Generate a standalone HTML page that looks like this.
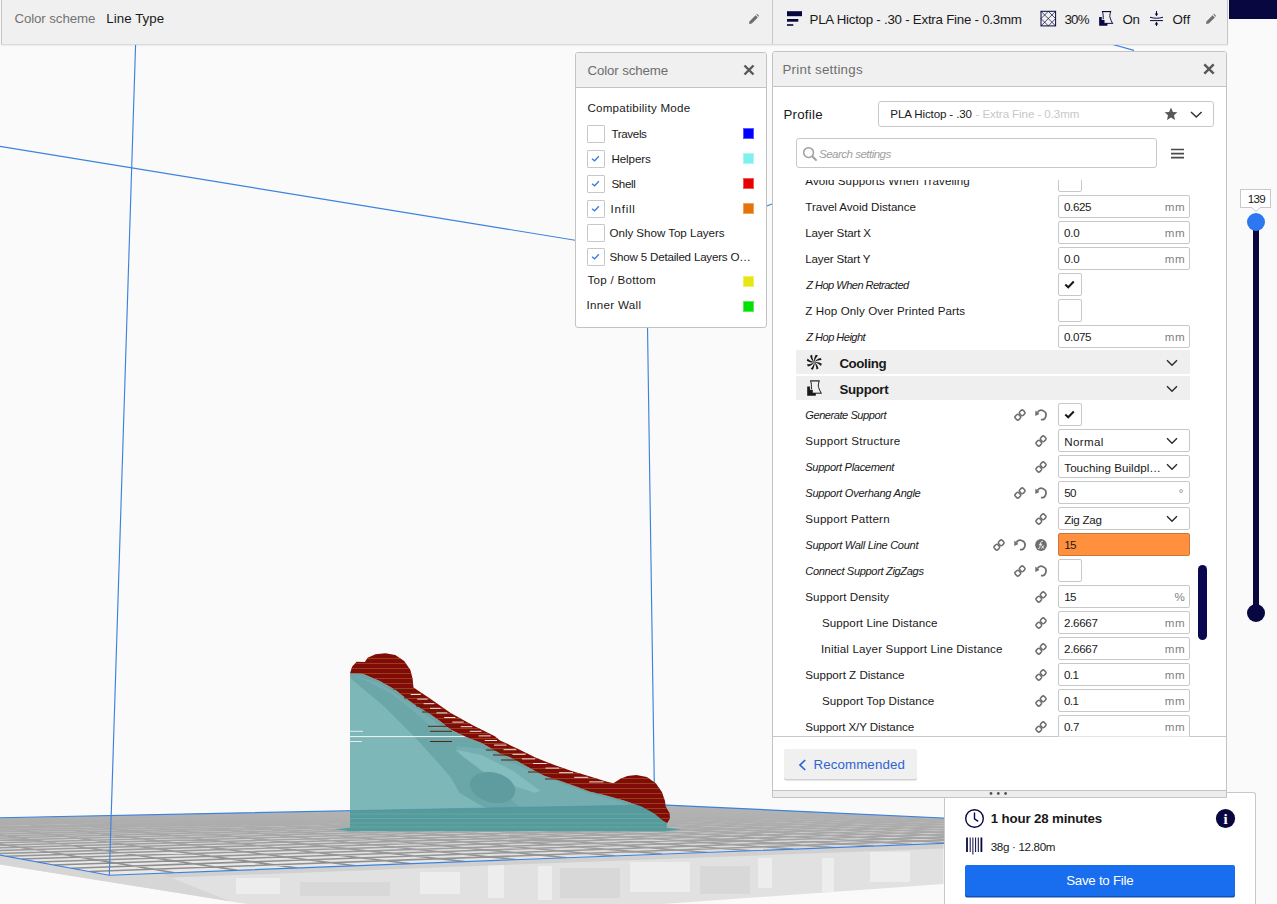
<!DOCTYPE html>
<html><head><meta charset="utf-8"><title>Cura</title>
<style>
html,body{margin:0;padding:0;}
body{width:1277px;height:904px;overflow:hidden;background:#fafafa;position:relative;font-family:"Liberation Sans",sans-serif;}
.abs{position:absolute;}
.t{position:absolute;white-space:nowrap;line-height:1;}
#scene{position:absolute;left:0;top:0;}
#topbar{position:absolute;left:1px;top:0;width:1227px;height:44.5px;background:#f0f0f0;border:1px solid #c6c6c6;border-top:none;border-bottom:1.5px solid #dadada;box-sizing:border-box;box-shadow:0 1px 1.5px rgba(0,0,0,.06);}
#topdiv{position:absolute;left:772px;top:0;width:1px;height:43.5px;background:#c8c8c8;}
#navy{position:absolute;left:1229px;top:0;width:48px;height:19px;background:#08073f;}
.panel{position:absolute;background:#fff;border:1px solid #c3c3c3;border-radius:3px;box-sizing:border-box;overflow:hidden;}
.phead{position:absolute;left:0;top:0;right:0;background:#f0f0f0;border-bottom:1px solid #c3c3c3;}
.cs-cb{position:absolute;left:587px;width:18px;height:18px;box-sizing:border-box;border:1px solid #c8c8c8;border-radius:1px;background:#fff;}
.sw{position:absolute;left:743px;width:11px;height:11px;box-sizing:border-box;border:1px solid rgba(255,255,255,.35);}
#scroll{position:absolute;left:0;top:0;width:1277px;height:904px;clip-path:inset(180px 0 167.5px 0);}
.fld{position:absolute;left:1058px;width:132px;height:23px;box-sizing:border-box;border:1px solid #c8c8c8;border-radius:2px;background:#fff;}
.fld.warn{background:#ff913e;border-color:#c8783c;}
.cb{position:absolute;left:1058px;width:23.5px;height:23px;box-sizing:border-box;border:1px solid #c8c8c8;border-radius:2px;background:#fff;}
.cat{position:absolute;left:796px;width:394px;height:24px;background:#efefef;}
.chev{position:absolute;}
</style></head>
<body>

<!-- 3D scene -->
<svg id="scene" width="1277" height="904" viewBox="0 0 1277 904">
<path d="M-2 854.6 L109.3 875.2 L943.5 843.4 L943.5 884 L663 904 L247 904 L-2 864.1 Z" fill="#e1e1e1"/>
<g fill="#ededed"><rect x="488" y="862" width="16" height="36"/><rect x="538" y="866" width="14" height="34"/><rect x="630" y="862" width="60" height="30"/><rect x="758" y="858" width="14" height="30"/><rect x="822" y="858" width="12" height="34"/><rect x="870" y="852" width="40" height="30"/><rect x="236" y="878" width="44" height="16"/><rect x="420" y="872" width="40" height="22"/></g>
<g fill="#d8d8d8"><rect x="560" y="868" width="60" height="30"/><rect x="700" y="866" width="50" height="28"/><rect x="300" y="882" width="90" height="14"/></g>
<path d="M109.3 875.2 L943.5 843.4 L943.5 848.4 L122 879.4 Z" fill="#d0d0d0"/>
<path d="M-2 854.6 L109.3 875.2 L160 873.3 L230 901.3 L-2 864.1 Z" fill="#d6d6d6"/>
<defs><linearGradient id="pg" x1="0" y1="805" x2="0" y2="875" gradientUnits="userSpaceOnUse"><stop offset="0" stop-color="#e2e2e2"/><stop offset="1" stop-color="#e9e9e9"/></linearGradient><linearGradient id="pf" x1="0" y1="806" x2="0" y2="862" gradientUnits="userSpaceOnUse"><stop offset="0" stop-color="#b8b8b8" stop-opacity="0.92"/><stop offset="0.45" stop-color="#bcbcbc" stop-opacity="0.6"/><stop offset="1" stop-color="#c4c4c4" stop-opacity="0"/></linearGradient><clipPath id="pc"><path d="M-183.9 821.4 L656 804.6 L1241.7 832.0 L109.3 875.2 Z"/></clipPath></defs>
<path d="M-183.9 821.4 L656 804.6 L1241.7 832.0 L109.3 875.2 Z" fill="url(#pg)"/>
<path d="M174.4 872.7L-142.2 820.6M237.0 870.3L-101.4 819.8M297.2 868.0L-61.6 819.0M355.2 865.8L-22.7 818.2M411.0 863.7L15.4 817.4M464.8 861.6L52.6 816.7M516.7 859.7L89.0 815.9M566.8 857.7L124.6 815.2M615.2 855.9L159.5 814.5M662.0 854.1L193.6 813.8M707.2 852.4L227.0 813.2M750.9 850.7L259.8 812.5M793.3 849.1L291.8 811.9M834.3 847.5L323.3 811.3M874.0 846.0L354.0 810.6M912.6 844.6L384.2 810.0M949.9 843.1L413.8 809.4M986.2 841.7L442.8 808.9M1021.4 840.4L471.2 808.3M1055.6 839.1L499.1 807.7M1088.8 837.8L526.5 807.2M1121.1 836.6L553.4 806.7M1152.5 835.4L579.8 806.1M1183.0 834.2L605.6 805.6M1212.8 833.1L631.0 805.1M89.7 871.6L1207.9 830.4M71.3 868.2L1175.4 828.9M53.7 865.0L1144.0 827.4M37.1 862.0L1113.7 826.0M21.3 859.1L1084.4 824.6M6.3 856.3L1056.1 823.3M-8.0 853.7L1028.8 822.0M-21.6 851.2L1002.4 820.8M-34.6 848.8L976.8 819.6M-47.1 846.5L952.0 818.4M-59.0 844.3L927.9 817.3M-70.4 842.2L904.6 816.2M-81.3 840.2L882.1 815.2M-91.8 838.3L860.1 814.2M-101.8 836.5L838.9 813.2M-111.5 834.7L818.2 812.2M-120.8 833.0L798.1 811.2M-129.7 831.3L778.6 810.3M-138.3 829.8L759.7 809.4M-146.6 828.2L741.2 808.6M-154.6 826.8L723.2 807.7M-162.3 825.4L705.8 806.9M-169.7 824.0L688.7 806.1M-176.9 822.7L672.2 805.4" fill="none" stroke="#8e8e8e" stroke-width="1.55" clip-path="url(#pc)"/>
<path d="M-183.9 821.4 L656 804.6 L1241.7 832.0 L109.3 875.2 Z" fill="url(#pf)"/>
<g fill="none" stroke="#3c82dc" stroke-width="1.15">
<path d="M-183.9 821.4 L656 804.6 L1241.7 832.0 L109.3 875.2 Z"/>
<path d="M135.6 44 L109.3 875.2"/>
<path d="M646.4 252 L654.6 805"/>
<path d="M0 146.3 L647 252 L772 204"/>
<path d="M1111 44 L1134 50.4"/>
</g>
<path d="M334 829.3 L350 827.8 L666 827.8 L681 829.3 L666 831.2 L350 831.2 Z" fill="#4f9f9f"/>
<path d="M350.0 673.2 L362.1 673.6 L379.8 680.9 L395.3 689.8 L406.4 698.7 L417.5 706.4 L428.5 713.0 L439.6 720.8 L450.7 729.6 L466.2 736.9 L481.7 742.9 L500.0 753.6 L510.6 757.5 L526.5 766.2 L544.2 775.8 L561.9 781.6 L579.6 787.8 L588.5 791.3 L606.2 795.6 L623.9 800.4 L641.6 806.5 L654.0 813.3 L662.8 820.4 L667.3 823.0 L666.4 831.0 L350.0 831.0 Z" fill="#6ba6a8"/>
<path d="M350.0 675.4 L351.1 678.7 L384.3 706.4 L413.0 735.2 L435.2 759.5 L450.7 777.2 L459.5 792.7 L481.7 806.0 L494.9 810.4 L350.0 810.4 Z" fill="#7db7b8"/>
<path d="M353.3 675.4 L379.8 683.2 L406.4 700.9 L428.5 716.4 L444.0 728.5 L433.0 728.5 L413.0 710.8 L390.9 693.1 L366.6 680.9 Z" fill="#74aeb0"/>
<path d="M455.1 746.2 L481.7 748.5 L508.2 759.5 L500.0 758.4 L526.5 769.0 L561.9 783.2 L588.5 792.9 L623.9 802.7 L650.4 815.0 L664.6 823.9 L666.4 831.0 L588.5 831.0 L553.1 823.9 L526.5 813.3 L510.6 799.1 Z" fill="#74aeb0"/>
<path d="M455.1 749.6 L481.7 755.1 L512.6 770.6 L540.3 791.0 L534.8 792.7 L508.2 783.9 L481.7 770.6 L463.9 757.3 Z" fill="#84bdbe"/>
<ellipse cx="492.7" cy="787.5" rx="23" ry="15" transform="rotate(14 492.7 787.5)" fill="#5f9c9f"/>
<path d="M350 810.6 L656 804.8 L666.4 805 L666.4 831 L350 831 Z" fill="#569b9b"/>
<path d="M350 814 H660 M350 818.5 H662 M350 823 H664 M350 827 H665" stroke="#63a6a6" stroke-width="1.2"/>
<path d="M350 810.6 L656 804.8" stroke="#4a90b8" stroke-width="1" opacity="0.5"/>
<path d="M350 736.6 H495" stroke="#f2f6f6" stroke-width="1"/><path d="M350 731.3 H363 M350 741.5 H362" stroke="#e4eeee" stroke-width="1"/>
<path d="M350.0 673.2 L352.2 666.6 L356.6 661.7 L364.8 662.1 L367.7 657.7 L375.4 654.2 L385.4 653.3 L395.3 655.1 L404.2 661.0 L410.4 669.9 L412.6 678.7 L413.5 687.6 L428.5 697.5 L450.7 713.0 L472.8 725.2 L494.9 736.3 L500.0 740.4 L517.7 748.7 L535.4 757.5 L553.1 764.6 L570.8 770.8 L588.5 776.1 L606.2 781.4 L613.3 783.2 L620.4 778.8 L627.4 776.1 L636.3 775.0 L646.9 777.0 L655.8 783.2 L661.9 792.0 L665.0 800.9 L665.5 806.2 L669.6 813.3 L669.9 818.6 L667.3 823.0 L667.3 823.0 L662.8 820.4 L654.0 813.3 L641.6 806.5 L623.9 800.4 L606.2 795.6 L588.5 791.3 L579.6 787.8 L561.9 781.6 L544.2 775.8 L526.5 766.2 L510.6 757.5 L500.0 753.6 L481.7 742.9 L466.2 736.9 L450.7 729.6 L439.6 720.8 L428.5 713.0 L417.5 706.4 L406.4 698.7 L395.3 689.8 L379.8 680.9 L362.1 673.6 L350.0 673.2 Z" fill="#820c0a"/>
<path d="M393 689 H411 M404 698 H424 M416 706 H436 M422 712 H444 M428 726.3 H452 M430 731.3 H452 M430 741.5 H452 M486 750 H510 M493 755 H517 M501 760 H524 M528 772 H552 M545 779 H566 M590 791 H606" stroke="#5a2410" stroke-width="1"/>
<clipPath id="rc"><path d="M350.0 673.2 L352.2 666.6 L356.6 661.7 L364.8 662.1 L367.7 657.7 L375.4 654.2 L385.4 653.3 L395.3 655.1 L404.2 661.0 L410.4 669.9 L412.6 678.7 L413.5 687.6 L428.5 697.5 L450.7 713.0 L472.8 725.2 L494.9 736.3 L500.0 740.4 L517.7 748.7 L535.4 757.5 L553.1 764.6 L570.8 770.8 L588.5 776.1 L606.2 781.4 L613.3 783.2 L620.4 778.8 L627.4 776.1 L636.3 775.0 L646.9 777.0 L655.8 783.2 L661.9 792.0 L665.0 800.9 L665.5 806.2 L669.6 813.3 L669.9 818.6 L667.3 823.0 L667.3 823.0 L662.8 820.4 L654.0 813.3 L641.6 806.5 L623.9 800.4 L606.2 795.6 L588.5 791.3 L579.6 787.8 L561.9 781.6 L544.2 775.8 L526.5 766.2 L510.6 757.5 L500.0 753.6 L481.7 742.9 L466.2 736.9 L450.7 729.6 L439.6 720.8 L428.5 713.0 L417.5 706.4 L406.4 698.7 L395.3 689.8 L379.8 680.9 L362.1 673.6 L350.0 673.2 Z"/></clipPath><path d="M340 658.5 H690M340 663.5 H690M340 668.5 H690M340 673.5 H690M340 678.5 H690M340 683.5 H690M340 688.5 H690M340 693.5 H690M340 698.5 H690M340 703.5 H690M340 708.5 H690M340 713.5 H690M340 718.5 H690M340 723.5 H690M340 728.5 H690M340 733.5 H690M340 738.5 H690M340 743.5 H690M340 748.5 H690M340 753.5 H690M340 758.5 H690M340 763.5 H690M340 768.5 H690M340 773.5 H690M340 778.5 H690M340 783.5 H690M340 788.5 H690M340 793.5 H690M340 798.5 H690M340 803.5 H690M340 808.5 H690M340 813.5 H690M340 818.5 H690M340 823.5 H690" stroke="#a0521a" stroke-width="0.9" clip-path="url(#rc)" opacity="0.85"/>
<path d="M420.7 694.5 h-10.0M427.5 699.1 h-10.2M434.1 703.7 h-10.5M440.7 708.3 h-10.7M447.3 712.9 h-10.9M455.4 717.5 h-11.2M463.7 722.1 h-11.4M472.3 726.7 h-11.6M481.5 731.3 h-11.8M490.7 735.9 h-12.1M497.1 740.5 h-12.3M506.5 745.1 h-12.5M516.3 749.7 h-12.8M525.5 754.3 h-13.0M535.1 758.9 h-13.2M546.6 763.5 h-13.5M559.2 768.1 h-13.7M573.0 772.7 h-13.9M588.3 777.3 h-14.1M603.6 781.9 h-14.4" stroke="#f1e4e0" stroke-width="1" fill="none"/>
</svg>

<!-- top bar -->
<div id="topbar"></div>
<div id="topdiv"></div>
<div id="navy"></div>
<!-- top bar icons -->
<svg class="abs" style="left:0;top:0" width="1277" height="44" viewBox="0 0 1277 44">
  <!-- pencils -->
  <g id="pencilA" fill="#6e6e6e" transform="translate(749,14)">
    <path d="M0 10 L0.6 7.2 L6.6 1.2 L8.8 3.4 L2.8 9.4 Z"/><path d="M7.3 0.5 L8 -0.2 L10.2 2 L9.5 2.7 Z"/>
  </g>
  <g fill="#6e6e6e" transform="translate(1206,14)">
    <path d="M0 10 L0.6 7.2 L6.6 1.2 L8.8 3.4 L2.8 9.4 Z"/><path d="M7.3 0.5 L8 -0.2 L10.2 2 L9.5 2.7 Z"/>
  </g>
  <!-- quality icon -->
  <g fill="#08073f"><rect x="787" y="11.2" width="15" height="5"/><rect x="787" y="19" width="11.3" height="2.7"/><rect x="787" y="24.2" width="6.3" height="1.6"/></g>
  <!-- infill icon -->
  <g fill="none" stroke="#08073f" stroke-width="1">
    <rect x="1041" y="11.3" width="14.6" height="14.6" stroke-width="1"/>
    <path d="M1041 18.6 L1048.3 11.3 L1055.6 18.6 L1048.3 25.9 Z M1041 11.3 L1055.6 25.9 M1055.6 11.3 L1041 25.9" stroke-width="0.7"/>
  </g>
  <!-- support icon -->
  <g transform="translate(1098 10.7) scale(0.96)"><g color="#08073f">
  <path d="M4.1 0.9 H13.7" fill="none" stroke="currentColor" stroke-width="1.2"/>
  <path d="M4.7 1.2 C5.4 3.5 5.5 5.5 5.4 9 M13.1 1.2 C12.4 4 12 6 12.6 7.5 C13.2 9.5 14.2 11 14.9 12.9 M7 13.2 H15.8" fill="none" stroke="currentColor" stroke-width="1"/>
  <path d="M1.2 6.5 H3.9 V9.8 H6.8 V13.1 H9.8 V15.8 H1.2 Z" fill="currentColor"/></g></g>
  <!-- adhesion icon -->
  <g fill="none" stroke="#08073f" stroke-width="1">
    <path d="M1150 17.2 C1154 18.6 1159 18.6 1163 17.2 M1150 20.6 L1163 20.6"/>
    <path d="M1156.5 11 L1156.5 15.6 M1156.5 22.4 L1156.5 26" stroke-width="1"/>
    <path d="M1154.7 13.6 L1156.5 16.2 L1158.3 13.6 Z M1154.7 24.4 L1156.5 21.8 L1158.3 24.4 Z" fill="#08073f" stroke="none"/>
  </g>
</svg>

<!-- color scheme panel -->
<div class="panel" style="left:575px;top:52px;width:192px;height:276px;"><div class="phead" style="height:34px"></div></div>
<svg class="abs" style="left:743px;top:63.8px" width="12" height="12" viewBox="0 0 12 12"><path d="M1.5 1.5 L10.5 10.5 M10.5 1.5 L1.5 10.5" stroke="#585858" stroke-width="2.4" fill="none"/></svg>
<div class="cs-cb" style="top:125px"></div>
<div class="cs-cb" style="top:150px"></div>
<div class="cs-cb" style="top:175px"></div>
<div class="cs-cb" style="top:200px"></div>
<div class="cs-cb" style="top:224px"></div>
<div class="cs-cb" style="top:248px"></div>
<svg class="abs" style="left:0;top:0" width="1277" height="340" viewBox="0 0 1277 340">
 <g fill="none" stroke="#3c78dc" stroke-width="1.25">
  <path d="M592 158.7 L594.6 160.8 L598.9 156.2"/><path d="M592 183.7 L594.6 185.8 L598.9 181.2"/><path d="M592 208.7 L594.6 210.8 L598.9 206.2"/><path d="M592 256.7 L594.6 258.8 L598.9 254.2"/>
 </g>
</svg>
<div class="sw" style="top:128.2px;background:#0000ff"></div>
<div class="sw" style="top:153.2px;background:#7ff0f0"></div>
<div class="sw" style="top:178.2px;background:#e60000"></div>
<div class="sw" style="top:203.2px;background:#e6730a"></div>
<div class="sw" style="top:276.2px;background:#e6e614"></div>
<div class="sw" style="top:301.2px;background:#00e100"></div>

<!-- print settings panel -->
<div class="panel" style="left:771.5px;top:51px;width:455.5px;height:747px;border-radius:3px 3px 0 0"><div class="phead" style="height:34px"></div>
  <div class="abs" style="left:0;right:0;top:684px;height:1px;background:#c8c8c8"></div>
  <div class="abs" style="left:0;right:0;top:738px;height:8px;background:#ededed;border-top:1px solid #c3c3c3;"></div>
</div>
<svg class="abs" style="left:1203px;top:63px" width="12" height="12" viewBox="0 0 12 12"><path d="M1.3 1.3 L10.7 10.7 M10.7 1.3 L1.3 10.7" stroke="#585858" stroke-width="2.4" fill="none"/></svg>
<!-- drag dots -->
<svg class="abs" style="left:985px;top:790px" width="30" height="8" viewBox="0 0 30 8"><g fill="#555"><circle cx="6" cy="3.5" r="1.4"/><circle cx="13.3" cy="3.5" r="1.4"/><circle cx="20.6" cy="3.5" r="1.4"/></g></svg>
<!-- profile dropdown -->
<div class="abs" style="left:878px;top:100.5px;width:336px;height:26.5px;box-sizing:border-box;border:1px solid #c8c8c8;border-radius:3px;background:#fff"></div>
<svg class="abs" style="left:1164px;top:107px" width="14" height="14" viewBox="0 0 14 14"><path d="M7 0.6 L8.9 4.9 L13.4 5.3 L10 8.3 L11 12.9 L7 10.5 L3 12.9 L4 8.3 L0.6 5.3 L5.1 4.9 Z" fill="#585858"/></svg>
<svg class="abs" style="left:1190px;top:110.5px" width="13" height="8" viewBox="0 0 13 8"><path d="M1 1 L6.3 6 L11.6 1" fill="none" stroke="#333" stroke-width="1.5"/></svg>
<!-- search -->
<div class="abs" style="left:796px;top:138px;width:361px;height:29.5px;box-sizing:border-box;border:1px solid #c8c8c8;border-radius:3px;background:#fff"></div>
<svg class="abs" style="left:802px;top:146px" width="16" height="16" viewBox="0 0 16 16"><circle cx="6.6" cy="6.6" r="4.9" fill="none" stroke="#a0a0a0" stroke-width="1.5"/><path d="M10.2 10.2 L14.6 14.6" stroke="#a0a0a0" stroke-width="2"/></svg>
<svg class="abs" style="left:1170.5px;top:147.5px" width="13" height="12" viewBox="0 0 13 12"><path d="M0 1.5 H13 M0 5.6 H13 M0 9.7 H13" stroke="#4a4a4a" stroke-width="1.7"/></svg>

<div id="scroll">
<div class="cb" style="top:169px"></div>
<div class="fld" style="top:195px"></div>
<div class="fld" style="top:221px"></div>
<div class="fld" style="top:247px"></div>
<div class="cb" style="top:273px"></div>
<svg class="abs" style="left:1064px;top:280.4px" width="12" height="10" viewBox="0 0 12 10"><path d="M1.3 4.6 L4.2 7.3 L9.8 1.5" fill="none" stroke="#191919" stroke-width="2"/></svg>
<div class="cb" style="top:299px"></div>
<div class="fld" style="top:325px"></div>
<div class="cat" style="top:350px"></div>
<svg class="chev" style="left:1166px;top:359px" width="12" height="8" viewBox="0 0 12 8"><path d="M1 1.2 L6 6.2 L11 1.2" fill="none" stroke="#2f2f2f" stroke-width="1.45"/></svg>
<div class="cat" style="top:376px"></div>
<svg class="chev" style="left:1166px;top:385px" width="12" height="8" viewBox="0 0 12 8"><path d="M1 1.2 L6 6.2 L11 1.2" fill="none" stroke="#2f2f2f" stroke-width="1.45"/></svg>
<div class="cb" style="top:403px"></div>
<svg class="abs" style="left:1064px;top:410.4px" width="12" height="10" viewBox="0 0 12 10"><path d="M1.3 4.6 L4.2 7.3 L9.8 1.5" fill="none" stroke="#191919" stroke-width="2"/></svg>
<svg class="abs" style="left:1034px;top:408px" width="14" height="14" viewBox="0 0 14 14"><g fill="none" stroke="#6e6e6e" stroke-width="1.75">
  <path d="M3.4 4.4 A4.7 4.7 0 1 1 6.9 11.7"/>
  <path d="M1.3 2.6 L1.3 8 L5.4 6 Z" fill="#6e6e6e" stroke="none"/></g></svg>
<svg class="abs" style="left:1013px;top:408px" width="14" height="14" viewBox="0 0 14 14"><g fill="none" stroke="#6e6e6e" stroke-width="1.55">
  <rect x="-2.45" y="-2.45" width="4.9" height="4.9" rx="1.5" transform="translate(9.2 4.8) rotate(45)"/>
  <rect x="-2.45" y="-2.45" width="4.9" height="4.9" rx="1.5" transform="translate(4.8 9.2) rotate(45)"/></g></svg>
<div class="fld" style="top:429px"></div>
<svg class="chev" style="left:1166px;top:437px" width="12" height="8" viewBox="0 0 12 8"><path d="M1 1.2 L6 6.2 L11 1.2" fill="none" stroke="#2f2f2f" stroke-width="1.45"/></svg>
<svg class="abs" style="left:1034px;top:434px" width="14" height="14" viewBox="0 0 14 14"><g fill="none" stroke="#6e6e6e" stroke-width="1.55">
  <rect x="-2.45" y="-2.45" width="4.9" height="4.9" rx="1.5" transform="translate(9.2 4.8) rotate(45)"/>
  <rect x="-2.45" y="-2.45" width="4.9" height="4.9" rx="1.5" transform="translate(4.8 9.2) rotate(45)"/></g></svg>
<div class="fld" style="top:455px"></div>
<svg class="chev" style="left:1166px;top:463px" width="12" height="8" viewBox="0 0 12 8"><path d="M1 1.2 L6 6.2 L11 1.2" fill="none" stroke="#2f2f2f" stroke-width="1.45"/></svg>
<svg class="abs" style="left:1034px;top:460px" width="14" height="14" viewBox="0 0 14 14"><g fill="none" stroke="#6e6e6e" stroke-width="1.55">
  <rect x="-2.45" y="-2.45" width="4.9" height="4.9" rx="1.5" transform="translate(9.2 4.8) rotate(45)"/>
  <rect x="-2.45" y="-2.45" width="4.9" height="4.9" rx="1.5" transform="translate(4.8 9.2) rotate(45)"/></g></svg>
<div class="fld" style="top:481px"></div>
<svg class="abs" style="left:1034px;top:486px" width="14" height="14" viewBox="0 0 14 14"><g fill="none" stroke="#6e6e6e" stroke-width="1.75">
  <path d="M3.4 4.4 A4.7 4.7 0 1 1 6.9 11.7"/>
  <path d="M1.3 2.6 L1.3 8 L5.4 6 Z" fill="#6e6e6e" stroke="none"/></g></svg>
<svg class="abs" style="left:1013px;top:486px" width="14" height="14" viewBox="0 0 14 14"><g fill="none" stroke="#6e6e6e" stroke-width="1.55">
  <rect x="-2.45" y="-2.45" width="4.9" height="4.9" rx="1.5" transform="translate(9.2 4.8) rotate(45)"/>
  <rect x="-2.45" y="-2.45" width="4.9" height="4.9" rx="1.5" transform="translate(4.8 9.2) rotate(45)"/></g></svg>
<div class="fld" style="top:507px"></div>
<svg class="chev" style="left:1166px;top:515px" width="12" height="8" viewBox="0 0 12 8"><path d="M1 1.2 L6 6.2 L11 1.2" fill="none" stroke="#2f2f2f" stroke-width="1.45"/></svg>
<svg class="abs" style="left:1034px;top:512px" width="14" height="14" viewBox="0 0 14 14"><g fill="none" stroke="#6e6e6e" stroke-width="1.55">
  <rect x="-2.45" y="-2.45" width="4.9" height="4.9" rx="1.5" transform="translate(9.2 4.8) rotate(45)"/>
  <rect x="-2.45" y="-2.45" width="4.9" height="4.9" rx="1.5" transform="translate(4.8 9.2) rotate(45)"/></g></svg>
<div class="fld warn" style="top:533px"></div>
<svg class="abs" style="left:1034px;top:538px" width="14" height="14" viewBox="0 0 14 14"><g>
  <circle cx="7" cy="7" r="5.9" fill="#6e6e6e"/>
  <path d="M4.2 10.6 C5.6 10.9 5.8 9.6 6 8.4 L6.7 4.9 C7 3.5 7.8 3 9 3.4 M4.9 6.3 L8.2 6.3 M7.4 7.4 L10 10.6 M10 7.4 L7.4 10.6" fill="none" stroke="#f0f0f0" stroke-width="1"/></g></svg>
<svg class="abs" style="left:1013px;top:538px" width="14" height="14" viewBox="0 0 14 14"><g fill="none" stroke="#6e6e6e" stroke-width="1.75">
  <path d="M3.4 4.4 A4.7 4.7 0 1 1 6.9 11.7"/>
  <path d="M1.3 2.6 L1.3 8 L5.4 6 Z" fill="#6e6e6e" stroke="none"/></g></svg>
<svg class="abs" style="left:992px;top:538px" width="14" height="14" viewBox="0 0 14 14"><g fill="none" stroke="#6e6e6e" stroke-width="1.55">
  <rect x="-2.45" y="-2.45" width="4.9" height="4.9" rx="1.5" transform="translate(9.2 4.8) rotate(45)"/>
  <rect x="-2.45" y="-2.45" width="4.9" height="4.9" rx="1.5" transform="translate(4.8 9.2) rotate(45)"/></g></svg>
<div class="cb" style="top:559px"></div>
<svg class="abs" style="left:1034px;top:564px" width="14" height="14" viewBox="0 0 14 14"><g fill="none" stroke="#6e6e6e" stroke-width="1.75">
  <path d="M3.4 4.4 A4.7 4.7 0 1 1 6.9 11.7"/>
  <path d="M1.3 2.6 L1.3 8 L5.4 6 Z" fill="#6e6e6e" stroke="none"/></g></svg>
<svg class="abs" style="left:1013px;top:564px" width="14" height="14" viewBox="0 0 14 14"><g fill="none" stroke="#6e6e6e" stroke-width="1.55">
  <rect x="-2.45" y="-2.45" width="4.9" height="4.9" rx="1.5" transform="translate(9.2 4.8) rotate(45)"/>
  <rect x="-2.45" y="-2.45" width="4.9" height="4.9" rx="1.5" transform="translate(4.8 9.2) rotate(45)"/></g></svg>
<div class="fld" style="top:585px"></div>
<svg class="abs" style="left:1034px;top:590px" width="14" height="14" viewBox="0 0 14 14"><g fill="none" stroke="#6e6e6e" stroke-width="1.55">
  <rect x="-2.45" y="-2.45" width="4.9" height="4.9" rx="1.5" transform="translate(9.2 4.8) rotate(45)"/>
  <rect x="-2.45" y="-2.45" width="4.9" height="4.9" rx="1.5" transform="translate(4.8 9.2) rotate(45)"/></g></svg>
<div class="fld" style="top:611px"></div>
<svg class="abs" style="left:1034px;top:616px" width="14" height="14" viewBox="0 0 14 14"><g fill="none" stroke="#6e6e6e" stroke-width="1.55">
  <rect x="-2.45" y="-2.45" width="4.9" height="4.9" rx="1.5" transform="translate(9.2 4.8) rotate(45)"/>
  <rect x="-2.45" y="-2.45" width="4.9" height="4.9" rx="1.5" transform="translate(4.8 9.2) rotate(45)"/></g></svg>
<div class="fld" style="top:637px"></div>
<svg class="abs" style="left:1034px;top:642px" width="14" height="14" viewBox="0 0 14 14"><g fill="none" stroke="#6e6e6e" stroke-width="1.55">
  <rect x="-2.45" y="-2.45" width="4.9" height="4.9" rx="1.5" transform="translate(9.2 4.8) rotate(45)"/>
  <rect x="-2.45" y="-2.45" width="4.9" height="4.9" rx="1.5" transform="translate(4.8 9.2) rotate(45)"/></g></svg>
<div class="fld" style="top:663px"></div>
<svg class="abs" style="left:1034px;top:668px" width="14" height="14" viewBox="0 0 14 14"><g fill="none" stroke="#6e6e6e" stroke-width="1.55">
  <rect x="-2.45" y="-2.45" width="4.9" height="4.9" rx="1.5" transform="translate(9.2 4.8) rotate(45)"/>
  <rect x="-2.45" y="-2.45" width="4.9" height="4.9" rx="1.5" transform="translate(4.8 9.2) rotate(45)"/></g></svg>
<div class="fld" style="top:689px"></div>
<svg class="abs" style="left:1034px;top:694px" width="14" height="14" viewBox="0 0 14 14"><g fill="none" stroke="#6e6e6e" stroke-width="1.55">
  <rect x="-2.45" y="-2.45" width="4.9" height="4.9" rx="1.5" transform="translate(9.2 4.8) rotate(45)"/>
  <rect x="-2.45" y="-2.45" width="4.9" height="4.9" rx="1.5" transform="translate(4.8 9.2) rotate(45)"/></g></svg>
<div class="fld" style="top:715px"></div>
<svg class="abs" style="left:1034px;top:720px" width="14" height="14" viewBox="0 0 14 14"><g fill="none" stroke="#6e6e6e" stroke-width="1.55">
  <rect x="-2.45" y="-2.45" width="4.9" height="4.9" rx="1.5" transform="translate(9.2 4.8) rotate(45)"/>
  <rect x="-2.45" y="-2.45" width="4.9" height="4.9" rx="1.5" transform="translate(4.8 9.2) rotate(45)"/></g></svg>
<span class="t" style="left:805.30px;top:174.88px;font-size:11.6px;letter-spacing:0.080px;color:#191919;">Avoid Supports When Traveling</span>
<span class="t" style="left:805.30px;top:200.88px;font-size:11.6px;letter-spacing:-0.044px;color:#191919;">Travel Avoid Distance</span>
<span class="t" style="left:1064.00px;top:200.88px;font-size:11.6px;letter-spacing:-0.391px;color:#191919;">0.625</span>
<span class="t" style="left:1164.70px;top:200.88px;font-size:11.6px;letter-spacing:0.642px;color:#7f7f7f;">mm</span>
<span class="t" style="left:805.30px;top:226.88px;font-size:11.6px;letter-spacing:-0.161px;color:#191919;">Layer Start X</span>
<span class="t" style="left:1064.00px;top:226.88px;font-size:11.6px;letter-spacing:-0.185px;color:#191919;">0.0</span>
<span class="t" style="left:1164.70px;top:226.88px;font-size:11.6px;letter-spacing:0.642px;color:#7f7f7f;">mm</span>
<span class="t" style="left:805.30px;top:252.88px;font-size:11.6px;letter-spacing:-0.186px;color:#191919;">Layer Start Y</span>
<span class="t" style="left:1064.00px;top:252.88px;font-size:11.6px;letter-spacing:-0.185px;color:#191919;">0.0</span>
<span class="t" style="left:1164.70px;top:252.88px;font-size:11.6px;letter-spacing:0.642px;color:#7f7f7f;">mm</span>
<span class="t" style="left:806.30px;top:280.20px;font-size:11.1px;letter-spacing:-0.557px;color:#191919;font-style:italic;">Z Hop When Retracted</span>
<span class="t" style="left:805.30px;top:304.88px;font-size:11.6px;letter-spacing:0.092px;color:#191919;">Z Hop Only Over Printed Parts</span>
<span class="t" style="left:806.30px;top:332.20px;font-size:11.1px;letter-spacing:-0.543px;color:#191919;font-style:italic;">Z Hop Height</span>
<span class="t" style="left:1064.00px;top:330.88px;font-size:11.6px;letter-spacing:-0.391px;color:#191919;">0.075</span>
<span class="t" style="left:1164.70px;top:330.88px;font-size:11.6px;letter-spacing:0.642px;color:#7f7f7f;">mm</span>
<span class="t" style="left:839.40px;top:356.84px;font-size:13.3px;letter-spacing:-0.376px;color:#191919;font-weight:700;">Cooling</span>
<span class="t" style="left:839.40px;top:382.84px;font-size:13.3px;letter-spacing:-0.289px;color:#191919;font-weight:700;">Support</span>
<span class="t" style="left:805.30px;top:410.20px;font-size:11.1px;letter-spacing:-0.467px;color:#191919;font-style:italic;">Generate Support</span>
<span class="t" style="left:805.30px;top:434.88px;font-size:11.6px;letter-spacing:0.255px;color:#191919;">Support Structure</span>
<span class="t" style="left:1064.30px;top:436.18px;font-size:11.6px;letter-spacing:0.343px;color:#191919;">Normal</span>
<span class="t" style="left:805.30px;top:462.20px;font-size:11.1px;letter-spacing:-0.329px;color:#191919;font-style:italic;">Support Placement</span>
<span class="t" style="left:1064.30px;top:462.18px;font-size:11.6px;letter-spacing:0.035px;color:#191919;">Touching Buildpl…</span>
<span class="t" style="left:805.30px;top:488.20px;font-size:11.1px;letter-spacing:-0.297px;color:#191919;font-style:italic;">Support Overhang Angle</span>
<span class="t" style="left:1064.30px;top:486.88px;font-size:11.6px;letter-spacing:-0.748px;color:#191919;">50</span>
<span class="t" style="left:1178.80px;top:486.88px;font-size:11.6px;letter-spacing:0.700px;color:#7f7f7f;">°</span>
<span class="t" style="left:805.30px;top:512.88px;font-size:11.6px;letter-spacing:0.224px;color:#191919;">Support Pattern</span>
<span class="t" style="left:1064.30px;top:514.18px;font-size:11.6px;letter-spacing:-0.293px;color:#191919;">Zig Zag</span>
<span class="t" style="left:805.30px;top:540.20px;font-size:11.1px;letter-spacing:-0.312px;color:#191919;font-style:italic;">Support Wall Line Count</span>
<span class="t" style="left:1064.30px;top:538.88px;font-size:11.6px;letter-spacing:-0.800px;color:#191919;">15</span>
<span class="t" style="left:805.30px;top:566.20px;font-size:11.1px;letter-spacing:-0.353px;color:#191919;font-style:italic;">Connect Support ZigZags</span>
<span class="t" style="left:805.30px;top:590.88px;font-size:11.6px;letter-spacing:0.086px;color:#191919;">Support Density</span>
<span class="t" style="left:1064.30px;top:590.88px;font-size:11.6px;letter-spacing:-0.800px;color:#191919;">15</span>
<span class="t" style="left:1174.50px;top:590.88px;font-size:11.6px;letter-spacing:-0.500px;color:#7f7f7f;">%</span>
<span class="t" style="left:822.00px;top:616.88px;font-size:11.6px;letter-spacing:0.074px;color:#191919;">Support Line Distance</span>
<span class="t" style="left:1064.00px;top:616.88px;font-size:11.6px;letter-spacing:-0.303px;color:#191919;">2.6667</span>
<span class="t" style="left:1164.70px;top:616.88px;font-size:11.6px;letter-spacing:0.642px;color:#7f7f7f;">mm</span>
<span class="t" style="left:821.00px;top:642.88px;font-size:11.6px;letter-spacing:0.143px;color:#191919;">Initial Layer Support Line Distance</span>
<span class="t" style="left:1064.00px;top:642.88px;font-size:11.6px;letter-spacing:-0.303px;color:#191919;">2.6667</span>
<span class="t" style="left:1164.70px;top:642.88px;font-size:11.6px;letter-spacing:0.642px;color:#7f7f7f;">mm</span>
<span class="t" style="left:805.30px;top:668.88px;font-size:11.6px;letter-spacing:-0.005px;color:#191919;">Support Z Distance</span>
<span class="t" style="left:1064.00px;top:668.88px;font-size:11.6px;letter-spacing:-0.585px;color:#191919;">0.1</span>
<span class="t" style="left:1164.70px;top:668.88px;font-size:11.6px;letter-spacing:0.642px;color:#7f7f7f;">mm</span>
<span class="t" style="left:822.00px;top:694.88px;font-size:11.6px;letter-spacing:0.084px;color:#191919;">Support Top Distance</span>
<span class="t" style="left:1064.00px;top:694.88px;font-size:11.6px;letter-spacing:-0.585px;color:#191919;">0.1</span>
<span class="t" style="left:1164.70px;top:694.88px;font-size:11.6px;letter-spacing:0.642px;color:#7f7f7f;">mm</span>
<span class="t" style="left:805.30px;top:720.88px;font-size:11.6px;letter-spacing:-0.089px;color:#191919;">Support X/Y Distance</span>
<span class="t" style="left:1064.00px;top:720.88px;font-size:11.6px;letter-spacing:-0.335px;color:#191919;">0.7</span>
<span class="t" style="left:1164.70px;top:720.88px;font-size:11.6px;letter-spacing:0.642px;color:#7f7f7f;">mm</span>
<!-- category icons -->
<svg class="abs" style="left:806px;top:354px" width="17" height="17" viewBox="0 0 17 17"><g transform="translate(8.3 8.2)" fill="#191919"><path d="M0 0 C-0.7 -2.6 0.1 -5.2 1.5 -7.5 L3.7 -6.7 C1.9 -5 0.7 -2.7 0 0 Z" transform="rotate(0)"/><path d="M0 0 C-0.7 -2.6 0.1 -5.2 1.5 -7.5 L3.7 -6.7 C1.9 -5 0.7 -2.7 0 0 Z" transform="rotate(45)"/><path d="M0 0 C-0.7 -2.6 0.1 -5.2 1.5 -7.5 L3.7 -6.7 C1.9 -5 0.7 -2.7 0 0 Z" transform="rotate(90)"/><path d="M0 0 C-0.7 -2.6 0.1 -5.2 1.5 -7.5 L3.7 -6.7 C1.9 -5 0.7 -2.7 0 0 Z" transform="rotate(135)"/><path d="M0 0 C-0.7 -2.6 0.1 -5.2 1.5 -7.5 L3.7 -6.7 C1.9 -5 0.7 -2.7 0 0 Z" transform="rotate(180)"/><path d="M0 0 C-0.7 -2.6 0.1 -5.2 1.5 -7.5 L3.7 -6.7 C1.9 -5 0.7 -2.7 0 0 Z" transform="rotate(225)"/><path d="M0 0 C-0.7 -2.6 0.1 -5.2 1.5 -7.5 L3.7 -6.7 C1.9 -5 0.7 -2.7 0 0 Z" transform="rotate(270)"/><path d="M0 0 C-0.7 -2.6 0.1 -5.2 1.5 -7.5 L3.7 -6.7 C1.9 -5 0.7 -2.7 0 0 Z" transform="rotate(315)"/></g></svg>
<svg class="abs" style="left:806px;top:380px" width="17" height="17" viewBox="0 0 17 17"><g color="#191919">
  <path d="M4.1 0.9 H13.7" fill="none" stroke="currentColor" stroke-width="1.2"/>
  <path d="M4.7 1.2 C5.4 3.5 5.5 5.5 5.4 9 M13.1 1.2 C12.4 4 12 6 12.6 7.5 C13.2 9.5 14.2 11 14.9 12.9 M7 13.2 H15.8" fill="none" stroke="currentColor" stroke-width="1"/>
  <path d="M1.2 6.5 H3.9 V9.8 H6.8 V13.1 H9.8 V15.8 H1.2 Z" fill="currentColor"/></g></svg>
</div>

<!-- recommended button -->
<div class="abs" style="left:784px;top:749px;width:132.5px;height:29.5px;background:#f0f0f0;border-radius:2px;box-shadow:0 1.5px 0 #d2d2d2"></div>
<svg class="abs" style="left:797.5px;top:759px" width="9" height="12" viewBox="0 0 9 12"><path d="M7.2 1 L2 6 L7.2 11" fill="none" stroke="#2d64d2" stroke-width="1.7"/></svg>

<!-- action panel -->
<div class="abs" style="left:944px;top:798px;width:312px;height:120px;box-sizing:border-box;border:1px solid #c8c8c8;border-top:none;background:#fff"></div>
<div class="abs" style="left:1227px;top:792px;width:29px;height:6px;box-sizing:border-box;border:1px solid #c8c8c8;border-left:none;border-bottom:none;border-radius:0 3px 0 0;background:#fff"></div>
<svg class="abs" style="left:964px;top:808px" width="21" height="21" viewBox="0 0 21 21"><circle cx="10.5" cy="10.5" r="8.8" fill="none" stroke="#08073f" stroke-width="1.4"/><path d="M10.5 4.6 V10.8 L14.2 13.4" fill="none" stroke="#08073f" stroke-width="1.4"/></svg>
<svg class="abs" style="left:1215px;top:808px" width="21" height="21" viewBox="0 0 21 21"><circle cx="10.5" cy="10.5" r="9.6" fill="#08073f"/><text x="10.7" y="15.6" text-anchor="middle" font-family="Liberation Serif, serif" font-weight="700" font-size="15" fill="#fff">i</text></svg>
<svg class="abs" style="left:966px;top:837px" width="17" height="18" viewBox="0 0 17 18"><g stroke="#08073f" fill="none"><path d="M1 0.5 V15" stroke-width="1.8"/><path d="M4.2 0.5 V15" stroke-width="1"/><path d="M6.9 0.5 V17.5" stroke-width="1"/><path d="M9.6 0.5 V15" stroke-width="1"/><path d="M12.3 0.5 V15" stroke-width="1"/><path d="M15.4 0.5 V15" stroke-width="1.8"/></g></svg>
<div class="abs" style="left:965px;top:865px;width:270px;height:31px;background:#196ef0;border-radius:2px;box-shadow:0 1.5px 0 #1450b4"></div>

<!-- layer slider -->
<div class="abs" style="left:1253px;top:222px;width:6px;height:391px;background:#08073f"></div>
<div class="abs" style="left:1247px;top:213.4px;width:18px;height:18px;border-radius:9px;background:#2d78f0"></div>
<div class="abs" style="left:1247px;top:603.5px;width:18px;height:18px;border-radius:9px;background:#08073f"></div>
<div class="abs" style="left:1240px;top:189px;width:31px;height:19px;box-sizing:border-box;border:1px solid #c8c8c8;background:#fff"></div>
<svg class="abs" style="left:1250px;top:206.5px" width="12" height="6" viewBox="0 0 12 6"><path d="M1.5 0.5 L6 4.6 L10.5 0.5" fill="#fff" stroke="#c8c8c8" stroke-width="1"/><path d="M2 0 H10" stroke="#fff" stroke-width="1.6"/></svg>
<!-- scrollbar -->
<div class="abs" style="left:1198px;top:564.5px;width:9px;height:75px;border-radius:4.5px;background:#0a0850"></div>

<span class="t" style="left:14.40px;top:12.34px;font-size:13.3px;letter-spacing:-0.094px;color:#737373;">Color scheme</span>
<span class="t" style="left:106.30px;top:12.34px;font-size:13.3px;letter-spacing:0.054px;color:#191919;">Line Type</span>
<span class="t" style="left:809.50px;top:12.74px;font-size:13.3px;letter-spacing:-0.239px;color:#191919;">PLA Hictop - .30 - Extra Fine - 0.3mm</span>
<span class="t" style="left:1064.50px;top:12.74px;font-size:13.3px;letter-spacing:-0.800px;color:#191919;">30%</span>
<span class="t" style="left:1122.50px;top:12.74px;font-size:13.3px;letter-spacing:-0.243px;color:#191919;">On</span>
<span class="t" style="left:1172.40px;top:12.74px;font-size:13.3px;letter-spacing:0.102px;color:#191919;">Off</span>
<span class="t" style="left:587.40px;top:63.64px;font-size:13.3px;letter-spacing:-0.112px;color:#6e6e6e;">Color scheme</span>
<span class="t" style="left:587.40px;top:101.88px;font-size:11.6px;letter-spacing:0.245px;color:#191919;">Compatibility Mode</span>
<span class="t" style="left:611.50px;top:127.68px;font-size:11.6px;letter-spacing:-0.363px;color:#191919;">Travels</span>
<span class="t" style="left:611.50px;top:152.68px;font-size:11.6px;letter-spacing:-0.109px;color:#191919;">Helpers</span>
<span class="t" style="left:611.50px;top:177.68px;font-size:11.6px;letter-spacing:-0.376px;color:#191919;">Shell</span>
<span class="t" style="left:610.50px;top:202.68px;font-size:11.6px;letter-spacing:0.752px;color:#191919;">Infill</span>
<span class="t" style="left:609.50px;top:226.98px;font-size:11.6px;letter-spacing:-0.037px;color:#191919;">Only Show Top Layers</span>
<span class="t" style="left:609.50px;top:250.78px;font-size:11.6px;letter-spacing:-0.204px;color:#191919;">Show 5 Detailed Layers O…</span>
<span class="t" style="left:587.40px;top:273.88px;font-size:11.6px;letter-spacing:0.289px;color:#191919;">Top / Bottom</span>
<span class="t" style="left:586.40px;top:298.78px;font-size:11.6px;letter-spacing:0.324px;color:#191919;">Inner Wall</span>
<span class="t" style="left:782.50px;top:62.54px;font-size:13.3px;letter-spacing:0.245px;color:#6e6e6e;">Print settings</span>
<span class="t" style="left:783.40px;top:107.54px;font-size:13.3px;letter-spacing:0.251px;color:#191919;">Profile</span>
<span class="t" style="left:890.30px;top:108.18px;font-size:11.6px;letter-spacing:-0.138px;color:#191919;">PLA Hictop - .30</span>
<span class="t" style="left:975.50px;top:108.18px;font-size:11.6px;letter-spacing:-0.094px;color:#c8c8c8;">- Extra Fine - 0.3mm</span>
<span class="t" style="left:819.00px;top:147.88px;font-size:11.6px;letter-spacing:-0.544px;color:#a0a0a0;font-style:italic;">Search settings</span>
<span class="t" style="left:1247.80px;top:192.78px;font-size:11.6px;letter-spacing:-0.748px;color:#191919;">139</span>
<span class="t" style="left:813.50px;top:757.74px;font-size:13.3px;letter-spacing:0.113px;color:#2d64d2;">Recommended</span>
<span class="t" style="left:990.70px;top:812.24px;font-size:13.3px;letter-spacing:-0.143px;color:#191919;font-weight:700;">1 hour 28 minutes</span>
<span class="t" style="left:990.70px;top:841.48px;font-size:11.6px;letter-spacing:-0.324px;color:#191919;">38g · 12.80m</span>
<span class="t" style="left:1066.20px;top:873.54px;font-size:13.3px;letter-spacing:-0.256px;color:#ffffff;">Save to File</span>
</body></html>
